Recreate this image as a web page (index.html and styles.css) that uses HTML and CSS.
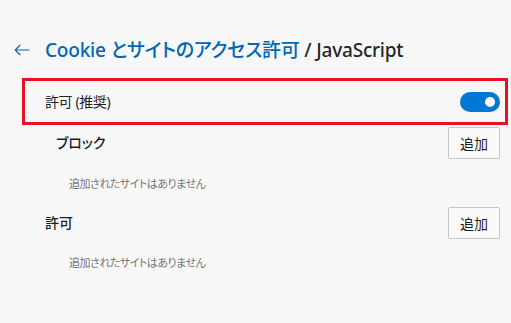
FILE: index.html
```html
<!DOCTYPE html>
<html lang="ja">
<head>
<meta charset="utf-8">
<link rel="stylesheet" href="styles.css">
</head>
<body>
<div class="header">
  <svg class="back" width="16" height="12" viewBox="0 0 16 12"><path d="M15.5 6H1.2M6.2 1L1.2 6L6.2 11" fill="none" stroke="#0067b8" stroke-width="1.2"/></svg>
  <h1 class="title"><span class="crumb">Cookie とサイトのアクセス許可</span> / JavaScript</h1>
</div>
<div class="allow-box">
  <span class="allow-label">許可 (推奨)</span>
  <span class="toggle"><span class="knob"></span></span>
</div>
<div class="row row-block">
  <span class="row-label">ブロック</span>
  <button class="add">追加</button>
</div>
<div class="empty">追加されたサイトはありません</div>
<div class="row row-allow">
  <span class="row-label">許可</span>
  <button class="add">追加</button>
</div>
<div class="empty empty-last">追加されたサイトはありません</div>
</body>
</html>
```

FILE: styles.css
```css
html, body {
  margin: 0;
  padding: 0;
  background: #f7f7f7;
  width: 511px;
  height: 323px;
  overflow: hidden;
}
body {
  font-family: "Noto Sans", "Noto Sans CJK JP", sans-serif;
  color: #1f1f1f;
  font-feature-settings: "palt";
}
.header {
  display: flex;
  align-items: center;
  height: 32px;
  margin-top: 34px;
  padding-left: 14px;
}
.back {
  display: block;
  margin-right: 15px;
}
.title {
  margin: 0;
  font-size: 19px;
  font-weight: 500;
  line-height: 32px;
  letter-spacing: -0.2px;
  color: #262626;
  white-space: nowrap;
}
.crumb {
  color: #0067b8;
}
.allow-box {
  box-sizing: border-box;
  margin: 12px 0 0 22px;
  width: 486px;
  height: 47px;
  border: 3px solid #e81123;
  display: flex;
  align-items: center;
  justify-content: space-between;
  padding: 0 5px 0 20px;
}
.allow-label {
  font-size: 14px;
  line-height: 20px;
  letter-spacing: -0.4px;
}
.toggle {
  width: 40px;
  height: 20px;
  border-radius: 10px;
  background: #0078d4;
  display: flex;
  align-items: center;
  justify-content: flex-end;
  padding-right: 5px;
  box-sizing: border-box;
}
.knob {
  width: 10px;
  height: 10px;
  border-radius: 50%;
  background: #fff;
}
.row {
  display: flex;
  align-items: center;
  justify-content: space-between;
  height: 32px;
  padding-right: 11px;
}
.row-block {
  margin-top: 2px;
  padding-left: 56px;
}
.row-allow {
  padding-left: 45px;
}
.row-label {
  font-size: 14px;
  font-weight: 500;
  line-height: 20px;
}
.add {
  box-sizing: border-box;
  width: 52px;
  height: 32px;
  border: 1px solid #c6c6c6;
  border-radius: 2px;
  background: #fafafa;
  font-family: inherit;
  font-size: 14px;
  color: #1f1f1f;
  padding: 0;
}
.empty {
  font-size: 11px;
  line-height: 14px;
  letter-spacing: -0.5px;
  color: #767676;
  padding: 18px 0 16px 69px;
}
.empty-last {
  padding-top: 17px;
}
```
